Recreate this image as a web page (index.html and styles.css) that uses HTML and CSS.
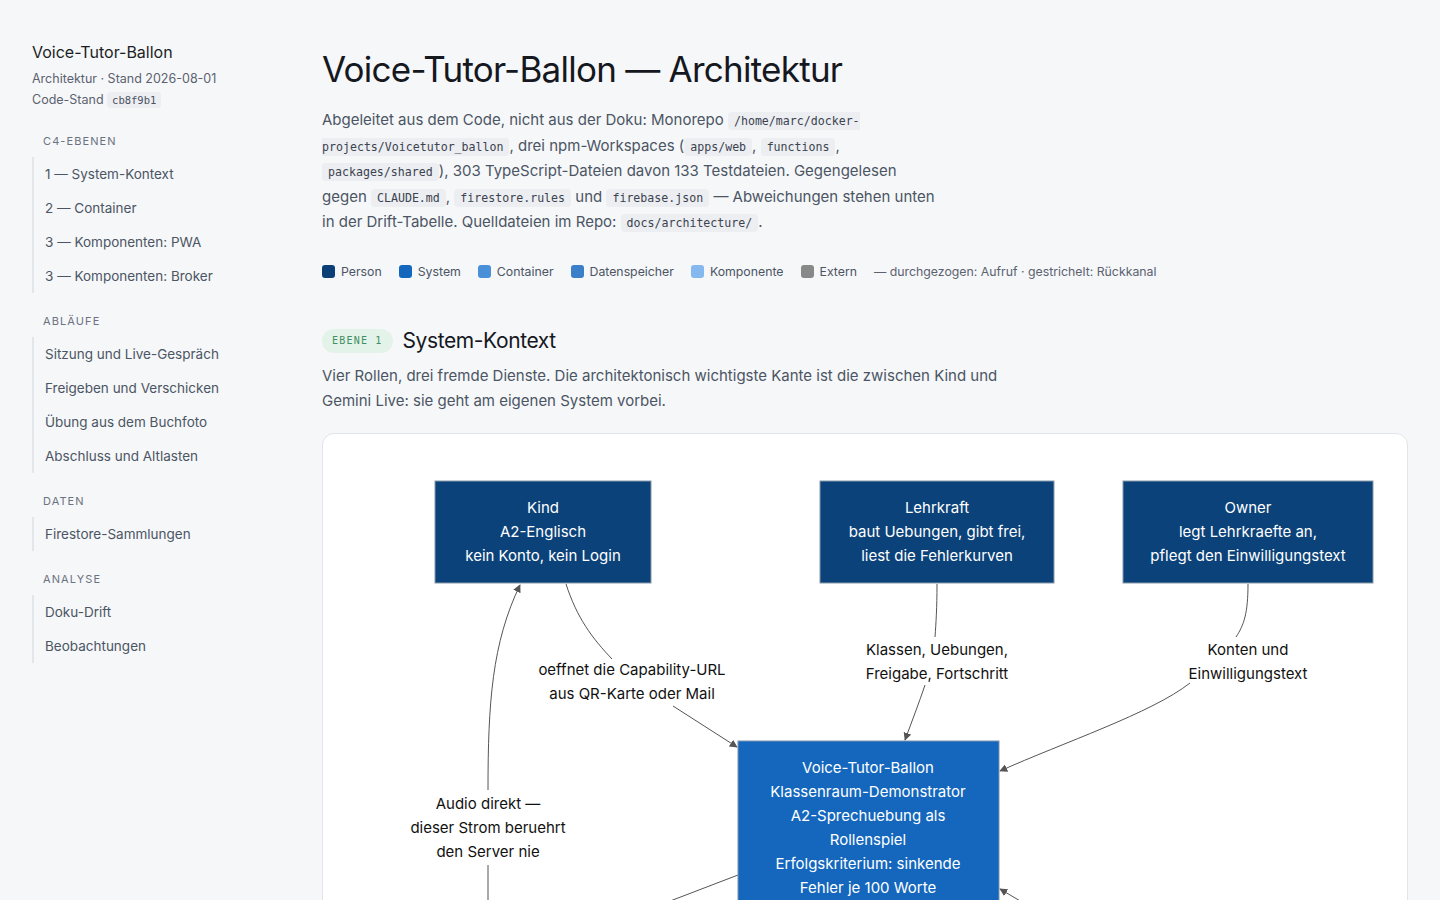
FILE: index.html
```html
<!DOCTYPE html>
<html lang="de">
<head>
<meta charset="utf-8">
<title>Voice-Tutor-Ballon — Architektur</title>
<link rel="stylesheet" href="styles.css">
</head>
<body>
<div class="layout">
  <aside class="sidebar">
    <div class="brand">Voice-Tutor-Ballon</div>
    <div class="meta">Architektur · Stand 2026-08-01</div>
    <div class="meta">Code-Stand <code class="chip">cb8f9b1</code></div>

    <nav class="nav">
      <div class="group">
        <div class="group-label">C4-Ebenen</div>
        <ul class="links">
          <li>1 — System-Kontext</li>
          <li>2 — Container</li>
          <li>3 — Komponenten: PWA</li>
          <li>3 — Komponenten: Broker</li>
        </ul>
      </div>
      <div class="group">
        <div class="group-label">Abläufe</div>
        <ul class="links">
          <li>Sitzung und Live-Gespräch</li>
          <li>Freigeben und Verschicken</li>
          <li>Übung aus dem Buchfoto</li>
          <li>Abschluss und Altlasten</li>
        </ul>
      </div>
      <div class="group">
        <div class="group-label">Daten</div>
        <ul class="links">
          <li>Firestore-Sammlungen</li>
        </ul>
      </div>
      <div class="group">
        <div class="group-label">Analyse</div>
        <ul class="links">
          <li>Doku-Drift</li>
          <li>Beobachtungen</li>
        </ul>
      </div>
    </nav>
  </aside>

  <main class="main">
    <h1 class="title">Voice-Tutor-Ballon — Architektur</h1>
    <p class="lead">Abgeleitet aus dem Code, nicht aus der Doku: Monorepo <code>/home/marc/docker-projects/Voicetutor_ballon</code>, drei npm-Workspaces (<code>apps/web</code>, <code>functions</code>, <code>packages/shared</code>), 303 TypeScript-Dateien davon 133 Testdateien. Gegengelesen gegen <code>CLAUDE.md</code>, <code>firestore.rules</code> und <code>firebase.json</code> — Abweichungen stehen unten in der Drift-Tabelle. Quelldateien im Repo: <code>docs/architecture/</code>.</p>

    <ul class="legend">
      <li><span class="sw sw-person"></span>Person</li>
      <li><span class="sw sw-system"></span>System</li>
      <li><span class="sw sw-container"></span>Container</li>
      <li><span class="sw sw-store"></span>Datenspeicher</li>
      <li><span class="sw sw-comp"></span>Komponente</li>
      <li><span class="sw sw-ext"></span>Extern</li>
      <li class="legend-note">— durchgezogen: Aufruf · gestrichelt: Rückkanal</li>
    </ul>

    <section class="section">
      <div class="section-head">
        <span class="badge">EBENE 1</span>
        <h2 class="section-title">System-Kontext</h2>
      </div>
      <p class="section-text">Vier Rollen, drei fremde Dienste. Die architektonisch wichtigste Kante ist die zwischen Kind und Gemini Live: sie geht am eigenen System vorbei.</p>

      <div class="card">
        <svg class="diagram" width="1085" height="640" viewBox="0 0 1085 640" xmlns="http://www.w3.org/2000/svg">
          <defs>
            <marker id="arr" viewBox="0 0 10 10" refX="9" refY="5" markerWidth="8" markerHeight="8" orient="auto-start-reverse">
              <path d="M0,0 L10,5 L0,10 z" fill="#555"/>
            </marker>
          </defs>

          <g class="edges" fill="none" stroke="#555" stroke-width="1">
            <path d="M244,151 C255,185 270,205 290,226"/>
            <path d="M351,273 L415,314" marker-end="url(#arr)"/>
            <path d="M166,432 L166,470"/>
            <path d="M166,357 C166,270 170,210 198,152" marker-end="url(#arr)"/>
            <path d="M615,151 C615,175 614,190 613,204"/>
            <path d="M603,252 C597,270 590,288 583,307" marker-end="url(#arr)"/>
            <path d="M926,151 C926,180 922,192 914,204"/>
            <path d="M868,250 C830,280 740,310 678,338" marker-end="url(#arr)"/>
            <path d="M416,442 L343,470"/>
            <path d="M710,475 L678,456" marker-end="url(#arr)"/>
          </g>

          <g class="nodes">
            <rect class="n-person" x="113" y="48" width="216" height="102"/>
            <rect class="n-person" x="498" y="48" width="234" height="102"/>
            <rect class="n-person" x="801" y="48" width="250" height="102"/>
            <rect class="n-system" x="416" y="308" width="261" height="200"/>
          </g>

          <g class="node-text" text-anchor="middle">
            <text x="221" y="74">Kind</text>
            <text x="221" y="98">A2-Englisch</text>
            <text x="221" y="122">kein Konto, kein Login</text>

            <text x="615" y="74">Lehrkraft</text>
            <text x="615" y="98">baut Uebungen, gibt frei,</text>
            <text x="615" y="122">liest die Fehlerkurven</text>

            <text x="926" y="74">Owner</text>
            <text x="926" y="98">legt Lehrkraefte an,</text>
            <text x="926" y="122">pflegt den Einwilligungstext</text>

            <text x="546" y="334">Voice-Tutor-Ballon</text>
            <text x="546" y="358">Klassenraum-Demonstrator</text>
            <text x="546" y="382">A2-Sprechuebung als</text>
            <text x="546" y="406">Rollenspiel</text>
            <text x="546" y="430">Erfolgskriterium: sinkende</text>
            <text x="546" y="454">Fehler je 100 Worte</text>
          </g>

          <g class="edge-text" text-anchor="middle">
            <text x="310" y="236">oeffnet die Capability-URL</text>
            <text x="310" y="260">aus QR-Karte oder Mail</text>

            <text x="615" y="216">Klassen, Uebungen,</text>
            <text x="615" y="240">Freigabe, Fortschritt</text>

            <text x="926" y="216">Konten und</text>
            <text x="926" y="240">Einwilligungstext</text>

            <text x="166" y="370">Audio direkt —</text>
            <text x="166" y="394">dieser Strom beruehrt</text>
            <text x="166" y="418">den Server nie</text>
          </g>
        </svg>
      </div>
    </section>
  </main>
</div>
</body>
</html>
```

FILE: styles.css
```css
* { box-sizing: border-box; }

html, body {
  margin: 0;
  padding: 0;
  background: #f6f7f9;
  color: #1b1e24;
  font-family: Inter, "Noto Sans", "Liberation Sans", sans-serif;
}

.layout {
  display: grid;
  grid-template-columns: 290px 1fr;
  min-height: 100vh;
}

/* Sidebar */
.sidebar {
  padding: 41px 20px 40px 32px;
}

.brand {
  font-size: 16px;
  line-height: 22px;
  color: #1b1e24;
  margin-bottom: 5px;
}

.meta {
  font-size: 12.5px;
  line-height: 21px;
  color: #5b6270;
}

.chip {
  font-family: "DejaVu Sans Mono", "Liberation Mono", monospace;
  font-size: 10.5px;
  line-height: 1;
  background: #eceef2;
  color: #4b5260;
  border-radius: 4px;
  padding: 2px 5px;
}

.nav {
  margin-top: 24px;
}

.group + .group {
  margin-top: 21px;
}

.group-label {
  font-size: 11px;
  line-height: 14px;
  letter-spacing: 1.1px;
  text-transform: uppercase;
  color: #6b7280;
  padding-left: 11px;
  margin-bottom: 9px;
}

.links {
  list-style: none;
  margin: 0;
  padding: 0;
  border-left: 2px solid #e3e6eb;
}

.links li {
  font-size: 13.5px;
  line-height: 18px;
  padding: 8px 11px;
  color: #4b5563;
}

/* Main */
.main {
  padding: 48px 32px 40px 32px;
  min-width: 0;
}

.title {
  margin: 0 0 16px 0;
  font-size: 35px;
  line-height: 43px;
  font-weight: 400;
  letter-spacing: -0.75px;
  color: #15181e;
}

.lead {
  margin: 0;
  max-width: 615px;
  font-size: 15px;
  line-height: 25.5px;
  color: #4b5563;
}

code {
  font-family: "DejaVu Sans Mono", "Liberation Mono", monospace;
  font-size: 11.6px;
  line-height: 1;
  background: #eceef1;
  color: #3b4250;
  border-radius: 4px;
  padding: 2px 6px;
}

.legend {
  list-style: none;
  margin: 28px 0 0 0;
  padding: 0;
  display: flex;
  flex-wrap: wrap;
  align-items: center;
  gap: 17px;
  font-size: 12.3px;
  line-height: 18px;
  color: #4b5563;
}

.legend li {
  display: flex;
  align-items: center;
  gap: 6px;
}

.sw {
  width: 13px;
  height: 13px;
  border-radius: 3px;
  display: inline-block;
}

.sw-person { background: #0b3f78; }
.sw-system { background: #1467bd; }
.sw-container { background: #4a90d9; }
.sw-store { background: #3a7fc8; }
.sw-comp { background: #85b8ee; }
.sw-ext { background: #888888; }

.legend-note { color: #5b6270; }

.section {
  margin-top: 46px;
}

.section-head {
  display: flex;
  align-items: center;
  gap: 10px;
}

.badge {
  font-family: "DejaVu Sans Mono", "Liberation Mono", monospace;
  font-size: 10px;
  letter-spacing: 1.2px;
  color: #3f8f62;
  background: #e4f3ea;
  border-radius: 12px;
  padding: 0 10px;
  line-height: 24px;
  height: 24px;
}

.section-title {
  margin: 0;
  font-size: 21px;
  line-height: 28px;
  font-weight: 400;
  letter-spacing: -0.4px;
  color: #15181e;
}

.section-text {
  margin: 8px 0 0 0;
  max-width: 690px;
  font-size: 15px;
  line-height: 25.5px;
  color: #4b5563;
}

.card {
  margin-top: 19px;
  background: #ffffff;
  border: 1px solid #e1e4e9;
  border-radius: 12px;
  height: 640px;
  overflow: hidden;
}

.diagram {
  display: block;
  margin: -1px 0 0 -1px;
}

.n-person {
  fill: #0b4279;
  stroke: #8898ab;
  stroke-width: 1;
}

.n-system {
  fill: #1467bd;
  stroke: #7f93ad;
  stroke-width: 1;
}

.node-text text {
  fill: #ffffff;
  font-size: 15px;
  dominant-baseline: central;
}

.edge-text text {
  fill: #111111;
  font-size: 15px;
  dominant-baseline: central;
}
```
